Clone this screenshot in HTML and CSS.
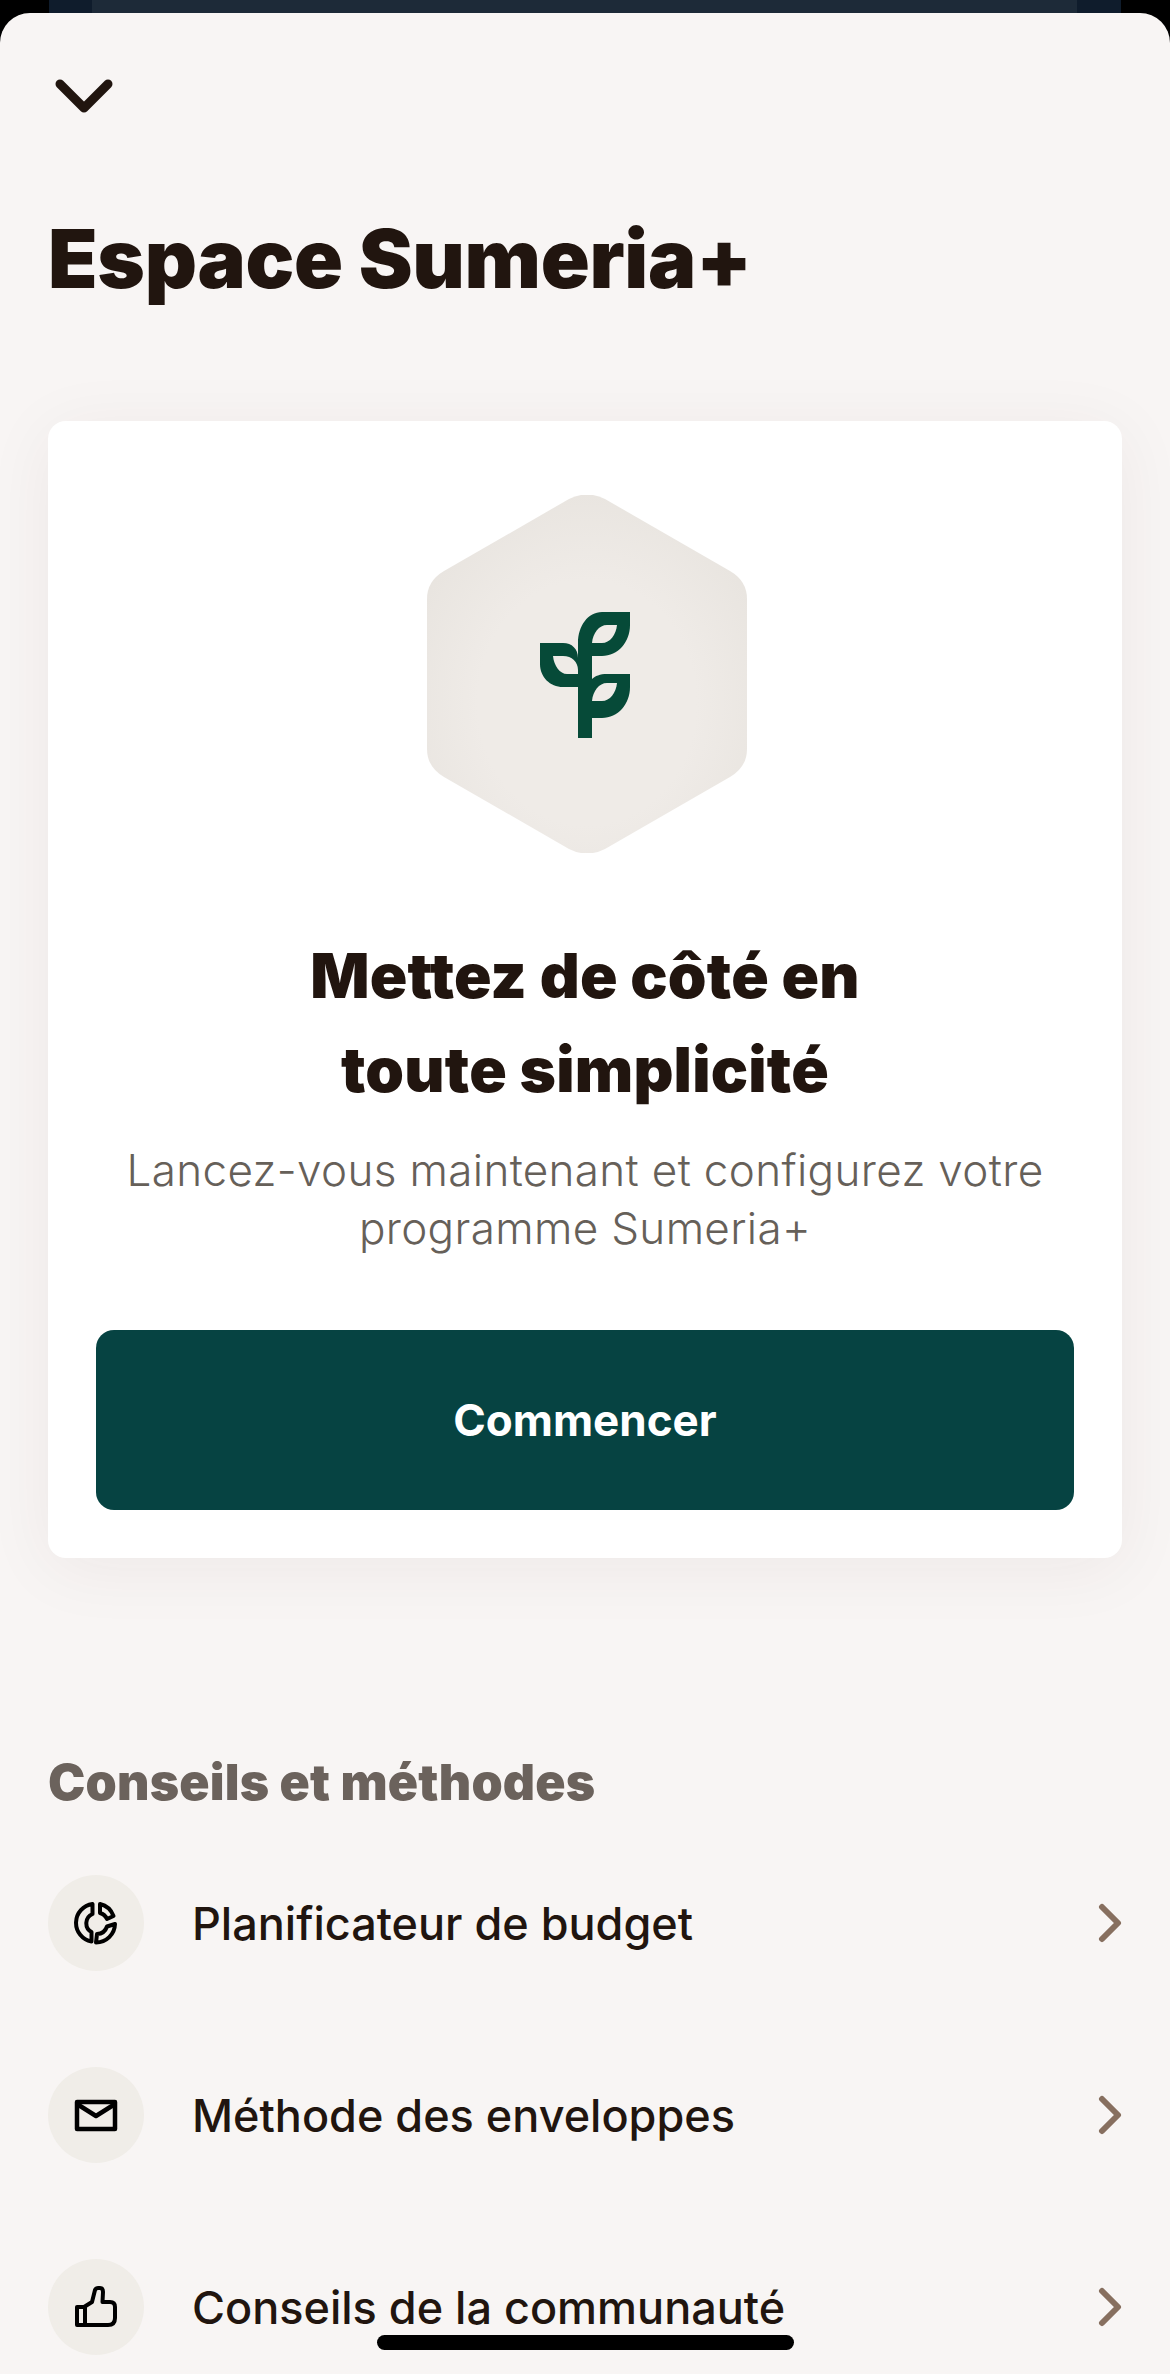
FILE: index.html
```html
<!DOCTYPE html>
<html lang="fr">
<head>
    <meta charset="UTF-8">
    <meta name="viewport" content="width=device-width, initial-scale=1.0">
    <title>Espace Sumeria+</title>
    <link rel="stylesheet" href="styles.css">
</head>
<body>
    <div class="backdrop"></div>
    <div class="sheet">
        <svg class="close-icon" viewBox="0 0 58 34" fill="none" stroke="#21150f" stroke-width="9" stroke-linecap="round" stroke-linejoin="round">
            <path d="M5 5 L29 29 L53 5"/>
        </svg>
        <h1>Espace Sumeria+</h1>

        <div class="card">
            <svg class="hex" viewBox="0 0 320 358">
                <defs>
                    <radialGradient id="hexFill" cx="50%" cy="58%" r="62%">
                        <stop offset="0.55" stop-color="#efebe7"/>
                        <stop offset="1" stop-color="#e8e4df"/>
                    </radialGradient>
                </defs>
                <path d="M142 4 Q160 -5 178 4 L303 76 Q320 86 320 104 L320 254 Q320 272 303 282 L178 354 Q160 363 142 354 L17 282 Q0 272 0 254 L0 104 Q0 86 17 76 Z" fill="url(#hexFill)"/>
                <g transform="translate(113 117)" fill="#064a38" fill-rule="evenodd">
                    <path d="M90 0 H62 C48 0 38 14 38 31 V126 H52 V106 H62 C78 106 90 92 90 75 V62 H67 C60 62 55 64 52 67 V44 H62 C78 44 90 30 90 13 Z M77 13 C76 23 70 31 62 31 H52 C53 21 59 13 67 13 Z M77 71 C76 81 70 89 62 89 H52 C53 79 59 71 67 71 Z"/>
                    <path d="M0 31 H23 C32 31 38 37 38 46 V75 H23 C10 75 0 65 0 52 Z M13 44 C14 54 20 62 27 62 H38 V58 C38 50 32 44 23 44 Z"/>
                </g>
            </svg>
            <h2>Mettez de côté en<br>toute simplicité</h2>
            <p>Lancez-vous maintenant et configurez votre programme Sumeria+</p>
            <button class="start-btn">Commencer</button>
        </div>

        <h3>Conseils et méthodes</h3>
        <div class="tips">
            <div class="tip">
                <span class="tip-icon">
                    <svg class="tip-svg" viewBox="0 0 44 44" fill="none" stroke="#000" stroke-width="4" stroke-linejoin="round">
                        <path d="M18.5 3 V13 A10 10 0 0 0 17.5 31 V40.5 A19 19 0 0 1 18.5 3 Z"/>
                        <path d="M26 3 A19 19 0 0 1 39.5 15 L33 18 A11 11 0 0 0 26 12 Z"/>
                        <path d="M41 23 A19 19 0 0 1 22 41.5 L23 33 A11 11 0 0 0 33 25.5 Z"/>
                    </svg>
                </span>
                <span class="tip-label">Planificateur de budget</span>
                <svg class="tip-arrow" viewBox="0 0 24 40" fill="none" stroke="#876f5f" stroke-width="6" stroke-linecap="round" stroke-linejoin="round">
                    <path d="M4 4 L20 20 L4 36"/>
                </svg>
            </div>
            <div class="tip">
                <span class="tip-icon">
                    <svg class="tip-svg" viewBox="0 0 44 44" fill="none" stroke="#000" stroke-width="4.5" stroke-linejoin="round">
                        <path d="M3 9 H41 V36 H3 Z"/>
                        <path d="M3 11 L22 23 L41 11"/>
                    </svg>
                </span>
                <span class="tip-label">Méthode des enveloppes</span>
                <svg class="tip-arrow" viewBox="0 0 24 40" fill="none" stroke="#876f5f" stroke-width="6" stroke-linecap="round" stroke-linejoin="round">
                    <path d="M4 4 L20 20 L4 36"/>
                </svg>
            </div>
            <div class="tip">
                <span class="tip-icon">
                    <svg class="tip-svg" viewBox="0 0 44 44" fill="none" stroke="#000" stroke-width="4" stroke-linejoin="round">
                        <path d="M3 22 H10 L18 17 L21 5 Q22 3 24 3 H26 Q29 3 29 7 L28.5 17 H36 Q41 17 41 22 V33 Q41 40 34 40 H3 Z"/>
                        <path d="M11 22 V40"/>
                    </svg>
                </span>
                <span class="tip-label">Conseils de la communauté</span>
                <svg class="tip-arrow" viewBox="0 0 24 40" fill="none" stroke="#876f5f" stroke-width="6" stroke-linecap="round" stroke-linejoin="round">
                    <path d="M4 4 L20 20 L4 36"/>
                </svg>
            </div>
        </div>
    </div>
    <div class="home-bar"></div>
</body>
</html>
```

FILE: styles.css
```css
html, body {
    margin: 0;
    height: 2374px;
    overflow: hidden;
}
body {
    position: relative;
    font-family: "Inter", "Liberation Sans", sans-serif;
    background-color: #000;
}
.backdrop {
    height: 13px;
    background: linear-gradient(to right, #000 0, #000 49px, #0f1c2c 49px, #0f1c2c 92px, #1d2a38 92px, #1d2a38 1077px, #0f1c2c 1077px, #0f1c2c 1121px, #000 1121px);
}
.sheet {
    height: 2361px;
    padding: 0 48px;
    box-sizing: border-box;
    background-color: #f8f5f4;
    border-radius: 30px 30px 0 0;
    overflow: hidden;
}
.close-icon {
    display: block;
    width: 58px;
    height: 34px;
    margin: 66px 0 0 7px;
}
h1 {
    margin: 96px 0 0 0;
    font-size: 81px;
    line-height: 100px;
    font-weight: 900;
    letter-spacing: -0.3px;
    color: #21150f;
}
.card {
    margin-top: 112px;
    padding: 74px 48px 48px;
    height: 1137px;
    box-sizing: border-box;
    background: white;
    border-radius: 18px;
    box-shadow: 0 10px 70px rgba(60, 40, 30, 0.06);
    text-align: center;
}
.hex {
    display: block;
    width: 320px;
    height: 358px;
    margin: 0 0 0 331px;
}
h2 {
    margin: 76px 0 0 0;
    font-size: 62px;
    line-height: 94px;
    font-weight: 900;
    letter-spacing: 0.2px;
    color: #21150f;
}
.card p {
    margin: 24px 0 0 0;
    font-size: 44px;
    line-height: 58px;
    letter-spacing: 0.35px;
    font-weight: 300;
    color: #666059;
}
.start-btn {
    display: block;
    width: 100%;
    height: 180px;
    margin-top: 73px;
    background-color: #064342;
    color: white;
    border: none;
    border-radius: 18px;
    font-family: inherit;
    font-size: 44px;
    font-weight: 700;
}
h3 {
    margin: 194px 0 0 0;
    font-size: 50px;
    line-height: 60px;
    font-weight: 900;
    letter-spacing: 0.2px;
    color: #6b625c;
}
.tips {
    display: flex;
    flex-direction: column;
    gap: 96px;
    margin-top: 63px;
}
.tip {
    display: flex;
    align-items: center;
    gap: 48px;
    height: 96px;
}
.tip-icon {
    display: flex;
    align-items: center;
    justify-content: center;
    width: 96px;
    height: 96px;
    border-radius: 50%;
    background-color: #f0ede8;
    flex-shrink: 0;
}
.tip-svg {
    width: 44px;
    height: 44px;
}
.tip-label {
    flex: 1;
    font-size: 45px;
    font-weight: 500;
    color: #21150f;
}
.tip-arrow {
    width: 24px;
    height: 40px;
}
.home-bar {
    position: absolute;
    left: 377px;
    top: 2335px;
    width: 417px;
    height: 15px;
    background: #000;
    border-radius: 8px;
}
```
